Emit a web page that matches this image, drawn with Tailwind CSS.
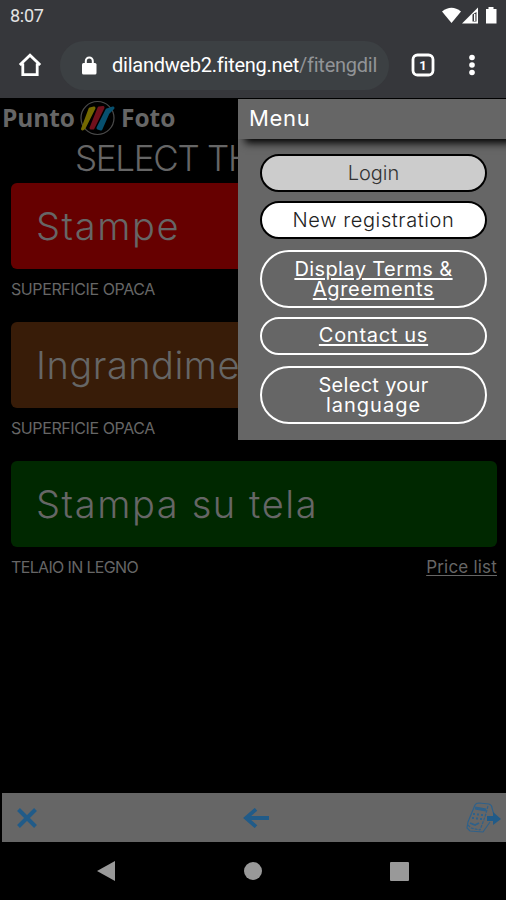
<!DOCTYPE html>
<html lang="en">

<head>
   <meta charset="UTF-8">
   <meta name="viewport" content="width=device-width, initial-scale=1.0">
   <title>Punto Foto</title>
   <script src="https://cdn.jsdelivr.net/npm/@tailwindcss/browser@4"></script>
</head>

<body class="bg-black w-[506px] h-[900px] overflow-hidden flex flex-col font-['Inter',sans-serif]">
   <!-- Browser chrome -->
   <header class="h-[98px] shrink-0 bg-[#36373b] text-white font-['Roboto',sans-serif]">
      <div class="h-8 flex items-center justify-between pl-[10px] pr-2">
         <span class="text-[18px] leading-8 text-[#e4e4e4] tracking-[-0.3px]">8:07</span>
         <svg class="w-[56px] h-[18px]" viewBox="0 0 56 18" fill="#fff">
            <path d="M0 4.500Q9.500 -3 19 4.500L9.500 16Z" />
            <path d="M20 16.500L36 0.500V16.500Z" />
            <path d="M30.500 7.500V14.500H34.500V5Z" fill="#36373b" />
            <path d="M32 7h1.400v7h-1.400z" />
            <path d="M46.500 0h5v2h3v14.500h-10.500V2h2.500Z" />
         </svg>
      </div>
      <div class="h-[66px] flex items-center pl-[18px]">
         <svg class="w-6 h-6" viewBox="0 0 24 24" fill="none" stroke="#fff" stroke-width="2.800">
            <path d="M1.800 12L12 2.200L22.200 12M4.800 10.500V21.700H19.200V10.500" />
         </svg>
         <div class="ml-[18px] w-[329px] h-[49px] rounded-full bg-[#3c4043] flex items-center pl-[22px]">
            <svg class="w-[15px] h-[19px]" viewBox="0 0 15 19">
               <rect x="0" y="7" width="14.500" height="11.500" rx="1.500" fill="#fff" />
               <path d="M3.800 8V5a3.500 3.500 0 0 1 7 0v3" fill="none" stroke="#fff" stroke-width="2" />
            </svg>
            <div class="ml-[15px] w-[265px] overflow-hidden whitespace-nowrap text-[20px] leading-7 tracking-[-0.25px]">dilandweb2.fiteng.net<span class="text-[#929497]">/fitengdil</span></div>
         </div>
         <svg class="ml-[22px] w-6 h-6" viewBox="0 0 24 24">
            <rect x="2" y="2" width="20" height="20" rx="4.500" fill="none" stroke="#fff" stroke-width="2.800" />
            <text x="12" y="16.500" text-anchor="middle" font-size="13" font-weight="700" fill="#fff">1</text>
         </svg>
         <svg class="ml-[34px] w-[6px] h-[22px]" viewBox="0 0 6 22" fill="#fff">
            <circle cx="3" cy="3.500" r="2.800" />
            <circle cx="3" cy="11" r="2.800" />
            <circle cx="3" cy="18.500" r="2.800" />
         </svg>
      </div>
   </header>

   <!-- Page behind the menu -->
   <main class="relative h-[695px] shrink-0 text-[#666]">
      <div class="h-[39px] flex items-center pl-[2px] font-['Open_Sans',sans-serif] font-bold text-[24.500px] leading-9">
         <span class="w-[72px] tracking-[-0.1px]">Punto</span>
         <svg class="ml-[5px] w-9 h-9" viewBox="0 0 36 36" fill="none" stroke-linecap="round" stroke-linejoin="round">
            <circle cx="18.500" cy="18" r="16.500" stroke="#4a4a4a" stroke-width="1.200" />
            <path d="M11 9L15 8L5 28L3.500 29L11 9" fill="#746900" stroke="#746900" stroke-width="3" />
            <path d="M20 8L24 7.500L14 28L12 28Z" fill="#70101c" stroke="#70101c" stroke-width="3" />
            <path d="M28 10L34 8L29 13L22 29L19 28Z" fill="#07506f" stroke="#07506f" stroke-width="3" />
         </svg>
         <span class="ml-[6px]">Foto</span>
      </div>
      <h1 class="h-[46px] pl-[75px] pr-2 overflow-hidden whitespace-nowrap text-[35px] leading-[42px] font-light tracking-[-1.300px]">SELECT THE PRODUCT</h1>

      <div class="pl-[11px] pr-[9px]">
         <div class="h-[86px] rounded-md bg-[#660000] pl-[25px] text-[38px] leading-[86px] font-light tracking-[1.600px]">Stampe</div>
         <div class="h-[53px] leading-[40px] text-[16px] tracking-[-0.4px]">SUPERFICIE OPACA</div>
         <div class="h-[86px] rounded-md bg-[#381c08] pl-[25px] text-[38px] leading-[86px] font-light tracking-[0.5px]">Ingrandimenti</div>
         <div class="h-[53px] leading-[40px] text-[16px] tracking-[-0.4px]">SUPERFICIE OPACA</div>
         <div class="h-[86px] rounded-md bg-[#002800] pl-[25px] text-[38px] leading-[86px] font-light tracking-[1.600px]">Stampa su tela</div>
         <div class="flex justify-between leading-[41px] text-[16px] tracking-[-0.65px]">
            <span>TELAIO IN LEGNO</span>
            <a class="underline underline-offset-2 text-[17px] tracking-[0.2px]">Price list</a>
         </div>
      </div>

      <!-- Menu panel -->
      <aside class="absolute left-[238px] top-px w-[268px] h-[341px] overflow-hidden bg-[#666] text-white text-[20px] leading-5 text-center">
         <div class="h-10 pl-[11px] text-left text-[22px] leading-[39px] tracking-[0.7px] shadow-[7px_4px_8px_0_#000]">Menu</div>
         <nav class="pt-[15px] pl-[22px] w-[249px] flex flex-col">
            <a class="h-[38px] rounded-full border-2 border-black bg-[#ccc] text-[#333] leading-[34px] font-light">Login</a>
            <a class="mt-[9px] h-[38px] rounded-full border-2 border-black bg-white text-[#222] leading-[34px] font-light tracking-[0.6px]">New registration</a>
            <a class="mt-[11px] h-[58px] rounded-full border-2 border-white underline underline-offset-2 pt-[7px] tracking-[0.4px]">Display Terms &amp;<br><span class="tracking-[0.7px]">Agreements</span></a>
            <a class="mt-[9px] h-[38px] rounded-full border-2 border-white underline underline-offset-2 leading-[33px] tracking-[0.7px]">Contact us</a>
            <a class="mt-[11px] h-[58px] rounded-full border-2 border-white pt-[7px] tracking-[0.3px]">Select your<br><span class="tracking-[1px]">language</span></a>
         </nav>
      </aside>
   </main>

   <!-- Bottom toolbar -->
   <footer class="ml-[2px] h-[49px] shrink-0 bg-[#666] flex items-center justify-between pl-[15px] pr-[5px]">
      <svg class="w-5 h-5" viewBox="0 0 20 20" stroke="#215b88" stroke-width="4">
         <path d="M1.500 1.500L18.500 18.500M18.500 1.500L1.500 18.500" />
      </svg>
      <svg class="ml-[9px] w-[26px] h-5" viewBox="0 0 26 20" fill="none" stroke="#215b88" stroke-width="3.800">
         <path d="M26 10H3M13 1.300L3 10L13 18.700" />
      </svg>
      <svg class="w-[35px] h-8" viewBox="0 0 35 32" fill="none" stroke="#2f618a" stroke-width="1.200">
         <path d="M9 3Q10 1 13 1L23 2Q26 3 26 6L28 13M24 20L17 30L4 29L1 26L2 20L9 3" />
         <path d="M22 4L19 15L14 28M2 23L5 26L14 28" stroke-dasharray="3 1" />
         <path d="M9 6L20 8" stroke-width="3" />
         <path d="M7 12h2M11 12.500h2M15 13h2M6 16h2M10 16.500h2M14 17h2M4 21l5 2l4-2" stroke-width="1.800" />
         <path d="M21 14h6v-4l8 7l-8 6v-4h-6z" fill="#215b88" stroke="none" />
      </svg>
   </footer>

   <!-- Android navigation -->
   <div class="h-[58px] shrink-0 flex items-center justify-between pl-[97px] pr-[97px]">
      <svg class="w-[18px] h-5" viewBox="0 0 18 20" fill="#999">
         <path d="M0 10L18 0V20Z" />
      </svg>
      <div class="w-[18px] h-[18px] rounded-full bg-[#999]"></div>
      <div class="w-[19px] h-[19px] rounded-[1px] bg-[#999]"></div>
   </div>
</body>

</html>
